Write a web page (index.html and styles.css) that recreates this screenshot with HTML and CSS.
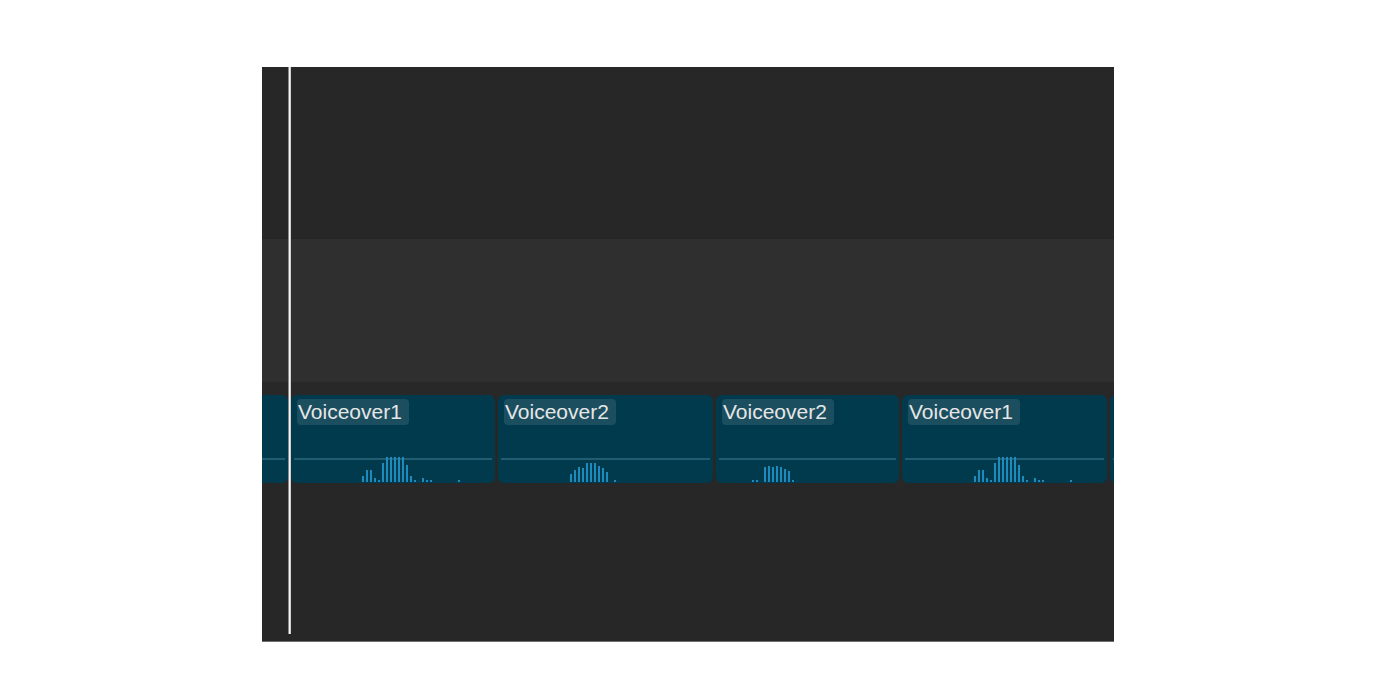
FILE: index.html
```html
<!DOCTYPE html>
<html>
<head>
<meta charset="utf-8">
<link rel="stylesheet" href="styles.css">
</head>
<body>
<div class="panel">
  <div class="track track-top"></div>
  <div class="track track-mid"></div>
  <div class="track-sep"></div>
  <div class="clips">
    <div class="clip" style="width:100px">
      <div class="wave"></div>
    </div>
    <div class="clip" style="width:204px">
      <div class="label">Voiceover1</div>
      <div class="wave" style="padding-left:68px">
        <i style="height:6px"></i><i style="height:12px"></i><i style="height:12px"></i><i style="height:4px"></i><i style="height:2px"></i><i style="height:19px"></i><i style="height:25px"></i><i style="height:25px"></i><i style="height:25px"></i><i style="height:25px"></i><i style="height:25px"></i><i style="height:17px"></i><i style="height:6px"></i><i style="height:2px"></i><i style="height:0"></i><i style="height:4px"></i><i style="height:2px"></i><i style="height:2px"></i><i style="height:0"></i><i style="height:0"></i><i style="height:0"></i><i style="height:0"></i><i style="height:0"></i><i style="height:0"></i><i style="height:2px"></i>
      </div>
    </div>
    <div class="clip" style="width:215px">
      <div class="label">Voiceover2</div>
      <div class="wave" style="padding-left:69px">
        <i style="height:8px"></i><i style="height:12px"></i><i style="height:15px"></i><i style="height:14px"></i><i style="height:19px"></i><i style="height:19px"></i><i style="height:19px"></i><i style="height:16px"></i><i style="height:14px"></i><i style="height:10px"></i><i style="height:0"></i><i style="height:2px"></i>
      </div>
    </div>
    <div class="clip" style="width:183px">
      <div class="label">Voiceover2</div>
      <div class="wave" style="padding-left:33px">
        <i style="height:2px"></i><i style="height:2px"></i><i style="height:0"></i><i style="height:15px"></i><i style="height:16px"></i><i style="height:15px"></i><i style="height:16px"></i><i style="height:15px"></i><i style="height:13px"></i><i style="height:11px"></i><i style="height:2px"></i>
      </div>
    </div>
    <div class="clip" style="width:205px">
      <div class="label">Voiceover1</div>
      <div class="wave" style="padding-left:69px">
        <i style="height:6px"></i><i style="height:12px"></i><i style="height:12px"></i><i style="height:4px"></i><i style="height:2px"></i><i style="height:19px"></i><i style="height:25px"></i><i style="height:25px"></i><i style="height:25px"></i><i style="height:25px"></i><i style="height:25px"></i><i style="height:17px"></i><i style="height:6px"></i><i style="height:2px"></i><i style="height:0"></i><i style="height:4px"></i><i style="height:2px"></i><i style="height:2px"></i><i style="height:0"></i><i style="height:0"></i><i style="height:0"></i><i style="height:0"></i><i style="height:0"></i><i style="height:0"></i><i style="height:2px"></i>
      </div>
    </div>
    <div class="clip" style="width:100px">
      <div class="wave"></div>
    </div>
  </div>
  <div class="track-rest"></div>
  <div class="playhead"></div>
</div>
</body>
</html>
```
FILE: styles.css
```css
html, body {
  margin: 0;
  padding: 0;
  background: #ffffff;
}
body {
  font-family: "Liberation Sans", Arial, sans-serif;
}
.panel {
  position: relative;
  margin: 67px 0 0 262px;
  width: 852px;
  height: 575px;
  background: #272727;
  overflow: hidden;
  display: flex;
  flex-direction: column;
  box-sizing: border-box;
  border-bottom: 1px solid #6e6e6e;
}
.track-top {
  height: 171px;
  background: #272727;
  flex: none;
}
.track-mid {
  height: 144px;
  background: #2f2f2f;
  border-top: 1px solid #242424;
  box-sizing: border-box;
  flex: none;
}
.track-sep {
  height: 13px;
  background: #282828;
  flex: none;
}
.clips {
  display: flex;
  gap: 3px;
  height: 88px;
  margin-left: -74px;
  flex: none;
}
.clip {
  flex: none;
  height: 88px;
  background: #023a4d;
  border-radius: 6px;
  display: flex;
  flex-direction: column;
  box-sizing: border-box;
}
.label {
  align-self: flex-start;
  margin: 4px 0 0 6px;
  height: 26px;
  line-height: 26px;
  padding: 0 7px 0 1px;
  font-size: 21px;
  color: #e6e6e6;
  background: rgba(255, 255, 255, 0.1);
  border-radius: 4px;
  white-space: nowrap;
}
.wave {
  position: relative;
  margin: auto 3px 1px 3px;
  height: 25px;
  display: flex;
  align-items: flex-end;
  gap: 2px;
}
.wave::before {
  content: "";
  position: absolute;
  left: 0;
  right: 0;
  top: 1px;
  height: 2px;
  background: rgba(90, 160, 180, 0.35);
}
.wave i {
  display: block;
  width: 2px;
  flex: none;
  background: #1b8cbd;
  position: relative;
}
.track-rest {
  flex: 1;
  background: #272727;
}
.playhead {
  position: absolute;
  left: 26px;
  top: 0;
  width: 3px;
  height: 567px;
  background: linear-gradient(to right, #8a8a8a 0, #8a8a8a 1px, #f4f4f4 1px, #f4f4f4 2px, #cfcfcf 2px);
}
```
